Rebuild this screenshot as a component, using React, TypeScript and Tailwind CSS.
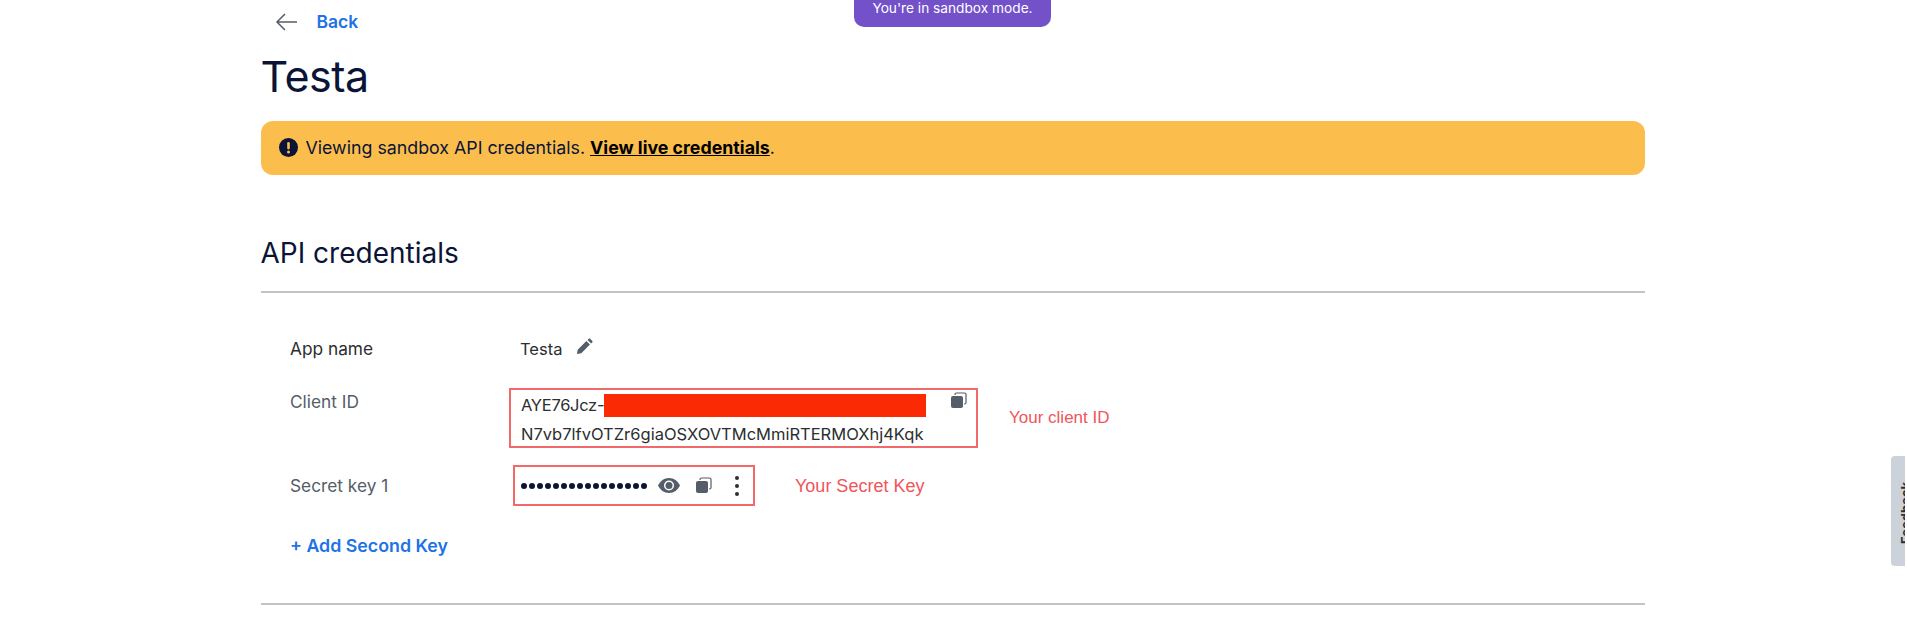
import React from 'react';

const CopyIcon = () => (
  <svg width="17" height="17" viewBox="0 0 17 17" aria-hidden="true">
    <path d="M5 3V2.500A1.500 1.500 0 0 1 6.500 1h8A1.500 1.500 0 0 1 16 2.500v8a1.500 1.500 0 0 1-1.500 1.500H14" fill="none" stroke="#545d68" strokeWidth="1.200" />
    <rect x="1" y="4" width="12" height="12" rx="2" fill="#545d68" />
  </svg>
);

const App: React.FC = () => {
  return (
    <main className="relative h-[626px] w-[1907px] overflow-hidden bg-white font-['Inter',sans-serif]">
      <div className="absolute left-[854px] top-0 flex h-[27px] w-[197px] items-start justify-center rounded-b-[10px] bg-[#7351c9] text-[13.700px] leading-[16px] text-white">
        You're in sandbox mode.
      </div>
      <div className="absolute left-[1891px] top-[456px] h-[110px] w-[14px] overflow-hidden rounded-l-[4px] bg-[#cbd2d9]">
        <span className="absolute bottom-[22px] left-[8px] rotate-180 whitespace-nowrap text-[13px] font-bold leading-[14px] text-[#2c2e2f] [writing-mode:vertical-rl]">
          Feedback
        </span>
      </div>

      <div className="ml-[260.500px] flex w-[1384.500px] flex-col">
        <a className="ml-[14px] mt-[10px] flex h-[24px] items-center">
          <svg width="22" height="18" viewBox="0 0 22 18" fill="none" stroke="#545d68" strokeWidth="1.500" aria-hidden="true">
            <path d="M22 9H2M10 1L2 9l8 8" />
          </svg>
          <span className="ml-[20px] text-[17.500px] font-semibold text-[#2172e5]">Back</span>
        </a>
        <h1 className="mt-[18px] h-[48px] text-[43px] font-normal leading-[48px] tracking-[-0.5px] text-[#0b1436]">Testa</h1>

        <div className="mt-[21px] flex h-[54px] items-center rounded-[12px] bg-[#fbbe4d] pl-[18px] text-[17.800px] text-[#0b1436]">
          <svg className="-mt-[1px]" width="19" height="19" viewBox="0 0 19 19" aria-hidden="true">
            <circle cx="9.500" cy="9.500" r="9.500" fill="#0b1436" />
            <rect x="8.200" y="4" width="2.600" height="7.400" rx="1.300" fill="#fbbe4d" />
            <circle cx="9.500" cy="14" r="1.500" fill="#fbbe4d" />
          </svg>
          <span className="ml-[8px] mt-[1px]">
            Viewing sandbox API credentials.{' '}
            <a className="font-bold text-black underline">View live credentials</a>.
          </span>
        </div>

        <h2 className="mt-[60px] h-[36px] text-[28px] font-normal leading-[36px] text-[#0b1436]">API credentials</h2>
        <div className="mt-[20px] h-[2px] bg-[#c4c4c4]" />

        <div className="flex flex-col pl-[29.500px] text-[17.300px]">
          <div className="mt-[40px] flex h-[32px] items-center">
            <span className="w-[230px] text-[#2c2e2f]">App name</span>
            <span className="text-[16.500px] text-[#2c2e2f]">Testa</span>
            <svg className="mb-[6px] ml-[14px]" width="17" height="17" viewBox="0 0 18 18" aria-hidden="true">
              <path d="M1 17l.8-4.600L11 3.200 14.800 7 5.600 16.200zM12.200 2l1.300-1.300a1 1 0 0 1 1.400 0l2.400 2.400a1 1 0 0 1 0 1.400L16 5.800z" fill="#545d68" />
            </svg>
          </div>

          <div className="mt-[23px] flex items-start">
            <span className="w-[219px] pt-[2px] leading-[24px] text-[#545d68]">Client ID</span>
            <div className="relative h-[60px] w-[469px] border-2 border-[#f2696c] pl-[10px] pt-[1px] text-[16.500px] leading-[30px] text-[#2c2e2f]">
              <div className="flex h-[28px] items-center tracking-[-0.3px]">
                AYE76Jcz-
                <span className="h-[23px] w-[322px] bg-[#fa2a05]" />
              </div>
              <div>N7vb7lfvOTZr6giaOSXOVTMcMmiRTERMOXhj4Kqk</div>
              <span className="absolute left-[439px] top-[2px]">
                <CopyIcon />
              </span>
            </div>
            <span className="ml-[31px] mt-[18px] font-['Liberation_Sans',sans-serif] text-[17px] leading-[24px] text-[#f0555b]">Your client ID</span>
          </div>

          <div className="mt-[17px] flex items-center">
            <span className="mt-[1px] w-[223px] text-[#545d68]">Secret key 1</span>
            <div className="flex h-[41px] w-[242px] items-center border-2 border-[#f2696c] pl-[6px]">
              <div className="flex gap-[2px]">
                {Array.from({ length: 16 }).map((_, i) => (
                  <span key={i} className="h-[6px] w-[6px] rounded-full bg-[#0b1436]" />
                ))}
              </div>
              <svg className="ml-[11px]" width="22" height="15" viewBox="0 0 22 15" aria-hidden="true">
                <path d="M11 0C6 0 2.200 3 0 7.500 2.200 12 6 15 11 15s8.800-3 11-7.500C19.800 3 16 0 11 0z" fill="#545d68" />
                <circle cx="11" cy="7.500" r="5" fill="#fff" />
                <circle cx="11" cy="7.500" r="3.500" fill="#545d68" />
              </svg>
              <span className="ml-[15px] flex">
                <CopyIcon />
              </span>
              <span className="ml-[23px] flex flex-col gap-[4px]">
                <span className="h-[4px] w-[4px] rounded-full bg-[#2c2e2f]" />
                <span className="h-[4px] w-[4px] rounded-full bg-[#2c2e2f]" />
                <span className="h-[4px] w-[4px] rounded-full bg-[#2c2e2f]" />
              </span>
            </div>
            <span className="ml-[40px] mt-[1px] font-['Liberation_Sans',sans-serif] text-[18px] text-[#f0555b]">Your Secret Key</span>
          </div>

          <a className="mt-[28px] h-[24px] text-[17.800px] font-semibold leading-[24px] text-[#2172e5]">+ Add Second Key</a>
        </div>

        <div className="mt-[45px] h-[2px] bg-[#c4c4c4]" />
      </div>
    </main>
  );
};

export default App;
